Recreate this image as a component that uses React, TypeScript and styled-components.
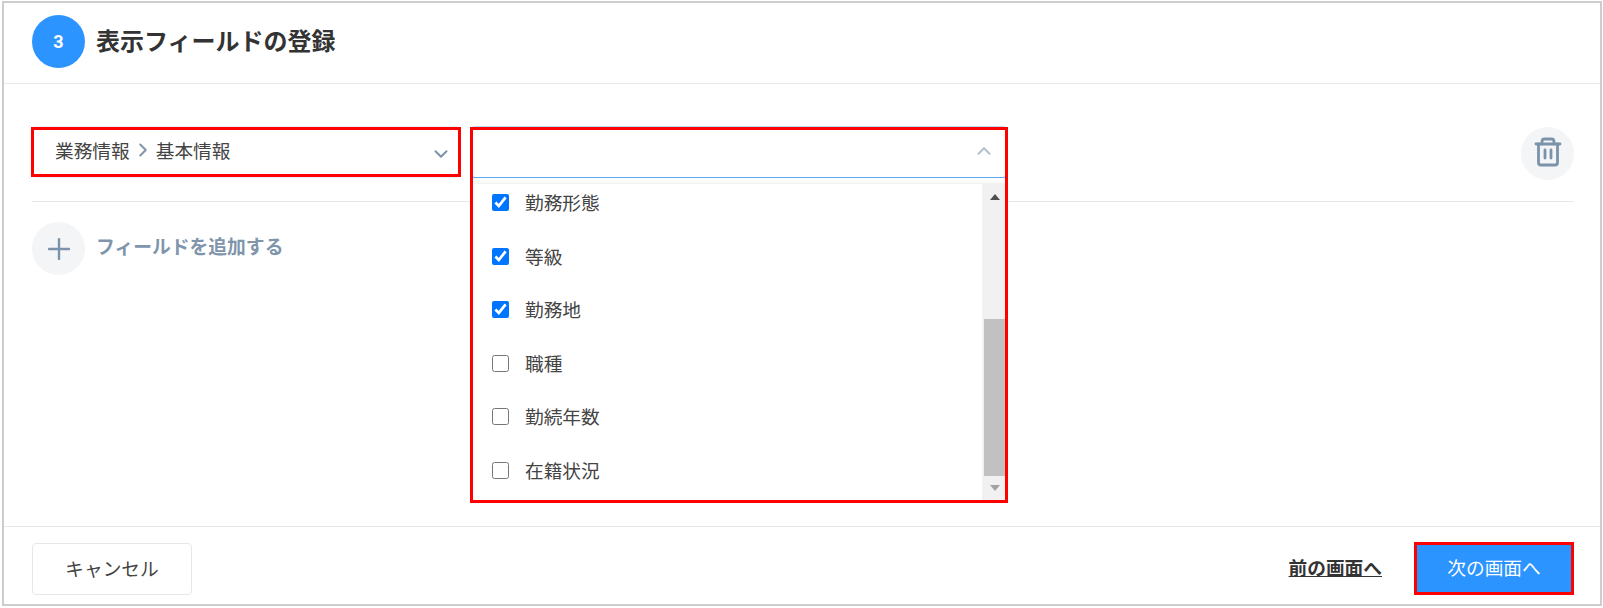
import React from 'react'
import styled, { createGlobalStyle } from 'styled-components'
import { ChevronDown, ChevronRight, ChevronUp, Plus } from 'lucide-react'

const FIELDS = [
  { label: '勤務形態', checked: true },
  { label: '等級', checked: true },
  { label: '勤務地', checked: true },
  { label: '職種', checked: false },
  { label: '勤続年数', checked: false },
  { label: '在籍状況', checked: false },
]

const App = (): JSX.Element => {
  return (
    <>
      <GlobalStyle />
      <Frame>
        <Header>
          <StepBadge>3</StepBadge>
          <Title>表示フィールドの登録</Title>
        </Header>
        <Body>
          <FieldRow>
            <CategoryBox>
              <SelectBox>
                <SelectValue>
                  業務情報
                  <ChevronRight size={22} color="#8297ab" strokeWidth={2.2} />
                  基本情報
                </SelectValue>
                <SelectChevron>
                  <ChevronDown size={22} color="#7b93aa" strokeWidth={2.2} />
                </SelectChevron>
              </SelectBox>
              <RedMark />
            </CategoryBox>
            <FieldBox>
              <SelectBox $open>
                <span />
                <SelectChevron $open>
                  <ChevronUp size={22} color="#b4c0cc" strokeWidth={2.2} />
                </SelectChevron>
              </SelectBox>
              <Menu>
                <MenuList>
                  {FIELDS.map(field => (
                    <MenuItem key={field.label}>
                      <CheckBox type="checkbox" defaultChecked={field.checked} />
                      <ItemText>{field.label}</ItemText>
                    </MenuItem>
                  ))}
                </MenuList>
                <ScrollBar>
                  <ArrowUp />
                  <Thumb />
                  <ArrowDown />
                </ScrollBar>
              </Menu>
              <RedMark />
            </FieldBox>
            <TrashButton>
              <TrashIcon width="28" height="30" viewBox="0 0 28 30" fill="none" stroke="#7b93aa" strokeWidth="2.8" strokeLinecap="round" strokeLinejoin="round">
                <path d="M2 7h24" />
                <path d="M8 7V4.5C8 2.8 9 2 10.5 2h7C19 2 20 2.8 20 4.5V7" />
                <path d="M4.5 7v18.5c0 1.6 1 2.5 2.5 2.5h14c1.5 0 2.5-.9 2.5-2.5V7" />
                <path d="M11 13v8M17 13v8" />
              </TrashIcon>
            </TrashButton>
          </FieldRow>
          <AddRow>
            <AddIcon>
              <Plus size={34} color="#7b93aa" strokeWidth={1.7} />
            </AddIcon>
            <AddLabel>フィールドを追加する</AddLabel>
          </AddRow>
        </Body>
        <Footer>
          <CancelButton>キャンセル</CancelButton>
          <FooterRight>
            <BackLink>前の画面へ</BackLink>
            <NextButton>次の画面へ</NextButton>
          </FooterRight>
        </Footer>
      </Frame>
    </>
  )
}

export default App

// Styling
const GlobalStyle = createGlobalStyle`
  html, body {
    margin: 0;
    padding: 0;
    background: #fff;
  }
  body {
    font-family: "Noto Sans CJK JP", "Noto Sans", sans-serif;
    color: #333;
  }
`

const Frame = styled.div`
  box-sizing: border-box;
  width: 1600px;
  height: 605px;
  margin: 1px 0 0 2px;
  border: 2px solid #cdcdcd;
  display: flex;
  flex-direction: column;
`

const Header = styled.div`
  box-sizing: border-box;
  height: 81px;
  padding: 0 26px 3px 28px;
  border-bottom: 1px solid #e6e9ec;
  display: flex;
  align-items: center;
  gap: 11px;
`

const StepBadge = styled.div`
  width: 53px;
  height: 53px;
  border-radius: 50%;
  background: #2b94ff;
  color: #fff;
  font-family: "Roboto", "Liberation Sans", sans-serif;
  font-weight: 700;
  font-size: 18px;
  display: flex;
  align-items: center;
  justify-content: center;
`

const Title = styled.div`
  font-size: 24px;
  font-weight: 700;
  color: #333;
  line-height: 1;
  margin-bottom: 4px;
`

const Body = styled.div`
  flex: 1;
  padding: 0 26px 0 28px;
`

const FieldRow = styled.div`
  box-sizing: border-box;
  height: 118px;
  padding-top: 43px;
  border-bottom: 1px solid #e6e9ec;
  display: flex;
  gap: 9px;
`

const CategoryBox = styled.div`
  position: relative;
  width: 430px;
  height: 50px;
  margin-left: -1px;
`

const FieldBox = styled.div`
  position: relative;
  width: 538px;
  height: 376px;
  z-index: 1;
`

// the red annotation drawn over the screenshot
const RedMark = styled.div`
  position: absolute;
  inset: 0;
  border: 3px solid #ff0000;
  pointer-events: none;
`

const SelectBox = styled.div<{ $open?: boolean }>`
  box-sizing: border-box;
  height: 52px;
  margin: -1px 1px 0;
  padding: 0 7px 0 22px;
  background: #fff;
  border-radius: 4px;
  border: 1px solid ${({ $open }) => ($open ? '#5aa9f5' : '#eef0f3')};
  border-top-color: ${({ $open }) => ($open ? '#bcd9f6' : '#eef0f3')};
  display: flex;
  align-items: center;
  justify-content: space-between;
`

const SelectChevron = styled.div<{ $open?: boolean }>`
  display: flex;
  margin-top: ${({ $open }) => ($open ? '-2px' : '4px')};
  margin-right: ${({ $open }) => ($open ? '4px' : '0')};
`

const SelectValue = styled.div`
  display: flex;
  align-items: center;
  gap: 2px;
  font-size: 18.7px;
  color: #444;
  margin-top: -5px;
`

const Menu = styled.div`
  position: absolute;
  top: 57px;
  left: 3px;
  right: 3px;
  height: 316px;
  background: #fff;
  box-shadow: 0 0 5px rgba(0, 0, 0, 0.12);
  display: flex;
`

const MenuList = styled.div`
  flex: 1;
  padding: 10px 0 0 19px;
  display: flex;
  flex-direction: column;
  gap: 36.5px;
`

const MenuItem = styled.label`
  height: 17px;
  display: flex;
  align-items: center;
  gap: 16px;
  font-size: 18.7px;
  color: #444;
  white-space: nowrap;
`

const ItemText = styled.span`
  margin-bottom: 2px;
`

const CheckBox = styled.input`
  width: 17px;
  height: 17px;
  margin: 0;
  flex: none;
`

const ScrollBar = styled.div`
  box-sizing: border-box;
  width: 23px;
  padding-left: 2px;
  background: #f1f1f1;
  display: flex;
  flex-direction: column;
  align-items: center;
`

const Thumb = styled.div`
  width: 100%;
  height: 157px;
  margin-top: 119px;
  background: #c1c1c1;
`

const ArrowUp = styled.div`
  margin-top: 10px;
  width: 0;
  height: 0;
  border-left: 5.5px solid transparent;
  border-right: 5.5px solid transparent;
  border-bottom: 6px solid #505050;
  flex: none;
`

const ArrowDown = styled.div`
  margin-top: 9px;
  width: 0;
  height: 0;
  border-left: 5.5px solid transparent;
  border-right: 5.5px solid transparent;
  border-top: 6px solid #a3a3a3;
  flex: none;
`

const TrashButton = styled.div`
  margin-left: auto;
  width: 53px;
  height: 53px;
  border-radius: 50%;
  background: #f3f5f7;
  display: flex;
  align-items: center;
  justify-content: center;
`

const TrashIcon = styled.svg`
  margin-bottom: 4px;
`

const AddRow = styled.div`
  margin-top: 20px;
  display: flex;
  align-items: center;
  gap: 11px;
`

const AddIcon = styled.div`
  width: 53px;
  height: 53px;
  border-radius: 50%;
  background: #f3f5f7;
  display: flex;
  align-items: center;
  justify-content: center;
`

const AddLabel = styled.div`
  font-size: 18.8px;
  font-weight: 700;
  color: #8095ab;
  margin-top: -7px;
`

const Footer = styled.div`
  box-sizing: border-box;
  height: 78px;
  padding: 16px 26px 0 28px;
  border-top: 1px solid #e4e9ee;
  display: flex;
  justify-content: space-between;
  align-items: flex-start;
`

const FooterRight = styled.div`
  display: flex;
  align-items: center;
  gap: 32px;
  margin-top: -1px;
`

const CancelButton = styled.button`
  box-sizing: border-box;
  width: 160px;
  height: 52px;
  padding: 0 0 4px;
  background: #fff;
  border: 1px solid #e4e8ec;
  border-radius: 4px;
  font-family: inherit;
  font-size: 18.7px;
  color: #444;
`

const BackLink = styled.a`
  font-size: 18.7px;
  font-weight: 700;
  color: #333;
  text-decoration: underline;
  margin-bottom: 4px;
`

const NextButton = styled.button`
  box-sizing: border-box;
  width: 160px;
  height: 53px;
  padding: 0 0 4px;
  background: #2b94ff;
  border: 3px solid #ff0000;
  font-family: inherit;
  font-size: 18.7px;
  color: #fff;
`
